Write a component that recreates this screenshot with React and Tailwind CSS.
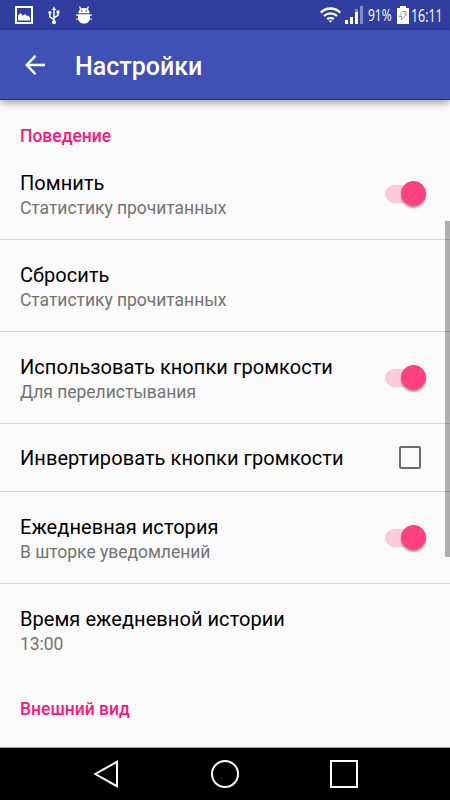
const settings = [
  { title: 'Помнить', summary: 'Статистику прочитанных', control: 'switch' },
  { title: 'Сбросить', summary: 'Статистику прочитанных' },
  { title: 'Использовать кнопки громкости', summary: 'Для перелистывания', control: 'switch' },
  { title: 'Инвертировать кнопки громкости', control: 'checkbox' },
  { title: 'Ежедневная история', summary: 'В шторке уведомлений', control: 'switch' },
  { title: 'Время ежедневной истории', summary: '13:00', last: true },
];

function StatusBar() {
  return (
    <div className="flex h-[30px] shrink-0 items-center bg-[#303f9f] pl-[15px] pr-[9px] text-white">
      <svg className="h-[18px] w-[18px]" viewBox="0 0 18 18">
        <rect x="1" y="1" width="16" height="16" fill="none" stroke="currentColor" strokeWidth="2" />
        <path d="M3 14.5V9.5L5.5 7l2.2 2.7L10 8l2 2 1.2-.6L15 11.5v3z" fill="currentColor" />
      </svg>
      <svg className="ml-[15px] h-[19px] w-[12px]" viewBox="0 0 12 19" fill="none" stroke="currentColor" strokeWidth="1.5">
        <path d="M6 3v13M6 13.5L1.8 10.8V7M6 11.8l4-2.5V6" />
        <path d="M6 .5L8 4H4z" fill="currentColor" stroke="none" />
        <circle cx="6" cy="16.3" r="2" fill="currentColor" stroke="none" />
        <circle cx="1.9" cy="6.5" r="1.6" fill="currentColor" stroke="none" />
        <path d="M8.5 4.5h3v3h-3z" fill="currentColor" stroke="none" />
      </svg>
      <svg className="ml-[15px] h-[18px] w-[18px]" viewBox="0 0 18 18">
        <path d="M3.4 7.3C3.4 4 5.8 2 9 2s5.6 2 5.6 5.3z" fill="currentColor" />
        <path d="M5.8 3.8L4.6.6M12.2 3.8L13.4.6" stroke="currentColor" strokeWidth="1.3" fill="none" />
        <path d="M1 8.4h16v1.4H1zM1 12.4h16v1.2H1z" fill="currentColor" />
        <path d="M3 8.4h12v3.3c0 3.7-2.5 5.9-6 5.9s-6-2.2-6-5.9z" fill="currentColor" />
        <circle cx="6.6" cy="5" r=".8" fill="#303f9f" />
        <circle cx="11.4" cy="5" r=".8" fill="#303f9f" />
      </svg>
      <svg className="ml-auto h-[16px] w-[21px]" viewBox="0 0 21 16" fill="none" stroke="currentColor" strokeWidth="2.4">
        <path d="M.8 5.6c5.5-5.4 13.9-5.4 19.4 0M4 9c3.7-3.5 9.3-3.5 13 0M7.2 12.2c1.9-1.7 4.7-1.7 6.6 0" />
        <path d="M8.7 13.8L10.5 15.8l1.8-2c-1-.9-2.6-.9-3.6 0z" fill="currentColor" stroke="none" />
      </svg>
      <svg className="ml-[4px] h-[18px] w-[18px]" viewBox="0 0 18 18" fill="currentColor">
        <path d="M0 14h3v4H0zM5 11h3v7H5zM10 6h3v12h-3z" />
        <path d="M15 0h3v18h-3zM10 3h3v3h-3z" opacity=".4" />
      </svg>
      <div className="ml-[5px] flex h-5 w-[24px] items-center">
        <span className="origin-left scale-x-[0.75] whitespace-nowrap font-['Open_Sans',sans-serif] text-[16px] leading-5">91%</span>
      </div>
      <svg className="ml-[5px] h-[18px] w-[12px]" viewBox="0 0 12 18">
        <path d="M0 2h3V0h6v2h3v16H0z" fill="currentColor" />
        <path d="M5.2 5.5h4L7.5 8.4l2.2-.4L4 14l1-3.8-2.6.4z" fill="none" stroke="#858aa5" strokeWidth=".8" />
      </svg>
      <div className="ml-[2px] flex h-5 w-[30px] items-center">
        <span className="origin-left scale-x-[0.71] whitespace-nowrap font-['Open_Sans',sans-serif] text-[17.5px] leading-5">16:11</span>
      </div>
    </div>
  );
}

function AppBar() {
  return (
    <header className="z-10 flex h-[70px] shrink-0 items-center border-b border-[#1233a3] bg-[#3f51b5] pl-[25px] text-white shadow-[0_3px_7px_rgba(0,0,0,0.34)]">
      <svg className="h-[20px] w-[20px]" viewBox="0 0 20 20" fill="none" stroke="currentColor" strokeWidth="2.3">
        <path d="M20 10H2M10.5 .9L1.6 10l8.9 9.1" />
      </svg>
      <h1 className="ml-[30px] pt-[4px] text-[25px] font-medium leading-[30px]">Настройки</h1>
    </header>
  );
}

function Switch() {
  return (
    <div className="flex h-[25px] w-[41px] items-center justify-end rounded-full">
      <div className="h-[18px] w-[29px] rounded-l-full bg-[#fccadb]" />
      <div className="-ml-[13px] h-[25px] w-[25px] shrink-0 rounded-full bg-[#ff4081] shadow-[0_2px_2px_rgba(0,0,0,0.35)]" />
    </div>
  );
}

function Checkbox() {
  return <div className="mr-[5px] h-[23px] w-[22px] rounded-[2px] border-2 border-[#6b6b6b]" />;
}

function SettingRow({ title, summary, control, last }) {
  return (
    <div className={`flex shrink-0 items-center justify-between pl-5 pr-[24px] ${summary ? 'h-[92px]' : 'h-[68px]'} ${last ? '' : 'border-b border-[#d3d3d3]'}`}>
      <div className={summary ? (last ? 'pt-[2px]' : 'pt-[4px]') : 'pt-px'}>
        <div className="text-[20px] leading-[26px] tracking-[0.06px] text-black">{title}</div>
        {summary && <div className="text-[17.5px] leading-[25px] tracking-[-0.03px] text-[#737373]">{summary}</div>}
      </div>
      {control === 'switch' && <Switch />}
      {control === 'checkbox' && <Checkbox />}
    </div>
  );
}

function SectionTitle({ children }) {
  return <h2 className="text-[17.5px] font-medium leading-6 text-[#ff1677]">{children}</h2>;
}

function NavigationBar() {
  return (
    <nav className="flex h-[53px] shrink-0 items-center justify-between border-t border-[#a5a5a5] bg-black pl-[93px] pr-[92px]">
      <svg className="h-[28px] w-[26px]" viewBox="0 0 26 28" fill="none" stroke="#fff" strokeWidth="2">
        <path d="M24 1.8v24.4L2.3 14z" />
      </svg>
      <div className="h-[28px] w-[28px] rounded-full border-2 border-white" />
      <div className="h-[28px] w-[28px] border-2 border-white" />
    </nav>
  );
}

export default function App() {
  return (
    <div className="flex h-[800px] w-[450px] flex-col overflow-hidden bg-[#fafafa] font-[Roboto,sans-serif]">
      <StatusBar />
      <AppBar />
      <main className="relative flex min-h-0 flex-1 flex-col">
        <div className="h-[48px] shrink-0 pl-5 pt-[24px]">
          <SectionTitle>Поведение</SectionTitle>
        </div>
        {settings.map((item) => (
          <SettingRow key={item.title} {...item} />
        ))}
        <div className="pl-5 pt-[21px]">
          <SectionTitle>Внешний вид</SectionTitle>
        </div>
        <div className="absolute right-0 top-[121px] h-[336px] w-[5px] bg-black/30" />
      </main>
      <NavigationBar />
    </div>
  );
}
